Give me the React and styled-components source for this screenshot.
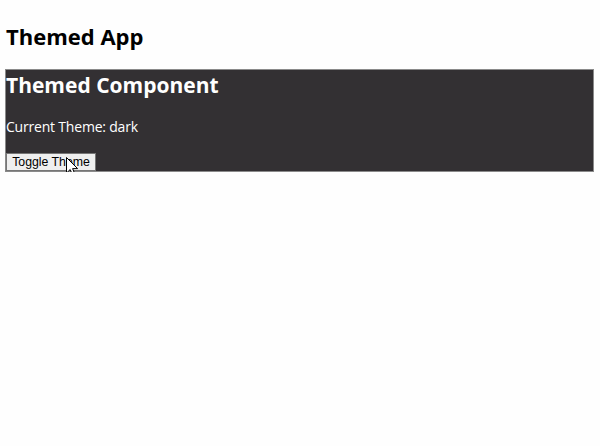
import React, { useState } from "react";
import styled, { createGlobalStyle } from "styled-components";

const Global = createGlobalStyle`
  html, body { background: #fefefe; }
  body {
    margin: 5px;
    font-family: "Open Sans", "Noto Sans", sans-serif;
    color: #000;
  }
`;

const Title = styled.h1`
  font-size: 22px;
  font-weight: 700;
  margin: 17px 1px 18px;
  line-height: 1.3;
`;

const Panel = styled.div`
  position: relative;
  background: ${(p) => (p.$dark ? "#333033" : "#ffffff")};
  color: ${(p) => (p.$dark ? "#ffffff" : "#000000")};
  border: 1px solid #8a8a8a;
  margin-right: 1px;
  padding: 0;
`;

const Heading = styled.h2`
  font-size: 21px;
  font-weight: 700;
  margin: 0;
  padding: 1px 0 0 0;
  line-height: 28px;
`;

const Text = styled.p`
  font-size: 14px;
  letter-spacing: -0.2px;
  margin: 18px 0 16px;
  line-height: 20px;
`;

const Button = styled.button`
  font-family: "Liberation Sans", Arial, sans-serif;
  font-size: 12.3px;
  color: #000;
  background: #efefef;
  border: 1px solid #767676;
  border-radius: 0;
  padding: 0;
  width: 90px;
  height: 18px;
  margin: 0;
  display: block;
  text-align: center;
  white-space: nowrap;
`;

const Cursor = styled.svg`
  position: absolute;
  left: 60px;
  top: 87px;
  width: 13px;
  height: 20px;
  pointer-events: none;
`;

export default function App() {
  const [theme, setTheme] = useState("dark");
  return (
    <>
      <Global />
      <Title>Themed App</Title>
      <Panel $dark={theme === "dark"}>
        <Heading>Themed Component</Heading>
        <Text>Current Theme: {theme}</Text>
        <Button onClick={() => setTheme(theme === "dark" ? "light" : "dark")}>
          Toggle Theme
        </Button>
        <Cursor viewBox="0 0 13 20">
          <path
            d="M0.5 0.5 L0.5 16 L4.2 12.5 L6.8 18.8 L9.2 17.8 L6.6 11.6 L11.6 11.6 Z"
            fill="#fff"
            stroke="#000"
            strokeWidth="1"
            strokeLinejoin="round"
          />
        </Cursor>
      </Panel>
    </>
  );
}
